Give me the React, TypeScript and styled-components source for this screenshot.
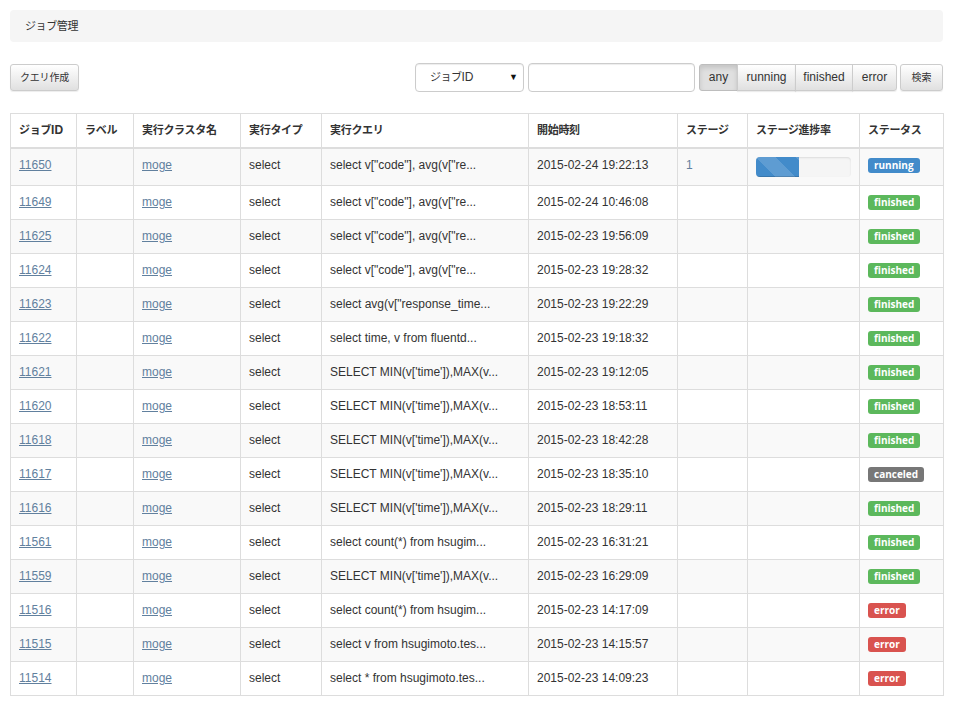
import React from "react";
import styled, { createGlobalStyle } from "styled-components";

const Global = createGlobalStyle`
  * { box-sizing: border-box; }
  html, body { margin: 0; padding: 0; background: #fff; }
  body {
    font-family: "Liberation Sans", Arial, "Noto Sans CJK JP", sans-serif;
    font-size: 12px;
    line-height: 17px;
    color: #333;
  }
`;

const Jp = styled.span<{ $size?: number; $ls?: number }>`
  font-size: ${(p) => p.$size ?? 11}px;
  letter-spacing: ${(p) => p.$ls ?? 0}px;
`;

const Page = styled.div`
  padding: 10px 15px 0 10px;
  width: 958px;
`;

const Breadcrumb = styled.div`
  background: #f5f5f5;
  border-radius: 4px;
  padding: 8px 15px 7px;
  height: 32px;
  line-height: 17px;
  color: #333;
`;

const Toolbar = styled.div`
  display: flex;
  align-items: center;
  margin-top: 21px;
  height: 29px;
`;

const Spacer = styled.div`
  flex: 1;
`;

const Btn = styled.button<{ $active?: boolean }>`
  font-family: "Liberation Sans", Arial, "Noto Sans CJK JP", sans-serif;
  font-size: 12px;
  line-height: 17px;
  height: 27px;
  padding: 0 10px;
  color: #333;
  border: 1px solid #ccc;
  border-radius: 3px;
  cursor: pointer;
  background: ${(p) =>
    p.$active
      ? "#e0e0e0"
      : "linear-gradient(to bottom, #ffffff 0%, #e0e0e0 100%)"};
  box-shadow: ${(p) =>
    p.$active
      ? "inset 0 3px 5px rgba(0,0,0,.125)"
      : "inset 0 1px 0 rgba(255,255,255,.15), 0 1px 1px rgba(0,0,0,.075)"};
  border-color: ${(p) => (p.$active ? "#bdbdbd" : "#ccc")};
`;

const CreateBtn = styled(Btn)`
  width: 69px;
  padding: 0;
`;

const SelectBox = styled.div`
  width: 109px;
  height: 29px;
  border: 1px solid #ccc;
  border-radius: 4px;
  background: #fff;
  display: flex;
  align-items: center;
  justify-content: space-between;
  padding: 0 5px 0 14px;
  box-shadow: inset 0 1px 1px rgba(0,0,0,.075);
`;

const Arrow = styled.span`
  font-size: 9px;
  color: #111;
`;

const TextInput = styled.input`
  width: 167px;
  height: 29px;
  margin-left: 4px;
  border: 1px solid #ccc;
  border-radius: 4px;
  box-shadow: inset 0 1px 1px rgba(0,0,0,.075);
  padding: 0 8px;
  font-size: 12px;
  outline: none;
`;

const Group = styled.div`
  display: flex;
  margin-left: 4px;
  & > button {
    border-radius: 0;
    margin-left: -1px;
  }
  & > button:first-child {
    border-radius: 3px 0 0 3px;
    margin-left: 0;
  }
  & > button:last-child {
    border-radius: 0 3px 3px 0;
  }
`;

const GroupBtn = styled(Btn)<{ $w: number }>`
  width: ${(p) => p.$w}px;
  padding: 0;
`;

const SearchBtn = styled(Btn)`
  width: 43px;
  padding: 0;
  margin-left: 3px;
`;

const Table = styled.table`
  margin-top: 21px;
  width: 933px;
  border-collapse: collapse;
  table-layout: fixed;
  border: 1px solid #ddd;
`;

const Th = styled.th`
  text-align: left;
  font-weight: bold;
  padding: 8px 8px 8px;
  border: 1px solid #ddd;
  border-bottom: 2px solid #ddd;
  white-space: nowrap;
  overflow: hidden;
  color: #333;
`;

const Tr = styled.tr<{ $striped: boolean }>`
  background: ${(p) => (p.$striped ? "#f9f9f9" : "#fff")};
`;

const Td = styled.td`
  padding: 8px;
  border: 1px solid #ddd;
  vertical-align: top;
  white-space: nowrap;
  overflow: hidden;
  height: 34px;
`;

const Link = styled.a`
  color: #61809e;
  text-decoration: underline;
  cursor: pointer;
`;

const StageNum = styled.span`
  color: #61809e;
`;

const Progress = styled.div`
  height: 20px;
  background: #f5f5f5;
  border-radius: 4px;
  overflow: hidden;
  box-shadow: inset 0 1px 2px rgba(0,0,0,.1);
`;

const ProgressBar = styled.div`
  height: 100%;
  background-color: #428bca;
  background-image: linear-gradient(
    45deg,
    rgba(255,255,255,.15) 25%,
    transparent 25%,
    transparent 50%,
    rgba(255,255,255,.15) 50%,
    rgba(255,255,255,.15) 75%,
    transparent 75%,
    transparent
  );
  background-size: 40px 40px;
  box-shadow: inset 0 -1px 0 rgba(0,0,0,.15);
`;

const statusColor: Record<string, string> = {
  running: "#428bca",
  finished: "#5cb85c",
  canceled: "#777777",
  error: "#d9534f",
};

const Label = styled.span<{ $status: string }>`
  display: inline-block;
  margin-top: 1px;
  padding: 1px 6px 2px;
  font-family: "Open Sans", "DejaVu Sans", sans-serif;
  font-size: 10px;
  font-weight: bold;
  line-height: 12px;
  color: #fff;
  border-radius: 3px;
  background: ${(p) => statusColor[p.$status]};
`;

type Row = {
  id: string;
  query: string;
  start: string;
  status: string;
  stage?: string;
  progress?: number;
};

const rows: Row[] = [
  { id: "11650", query: 'select v["code"], avg(v["re...', start: "2015-02-24 19:22:13", status: "running", stage: "1", progress: 45 },
  { id: "11649", query: 'select v["code"], avg(v["re...', start: "2015-02-24 10:46:08", status: "finished" },
  { id: "11625", query: 'select v["code"], avg(v["re...', start: "2015-02-23 19:56:09", status: "finished" },
  { id: "11624", query: 'select v["code"], avg(v["re...', start: "2015-02-23 19:28:32", status: "finished" },
  { id: "11623", query: 'select avg(v["response_time...', start: "2015-02-23 19:22:29", status: "finished" },
  { id: "11622", query: "select time, v from fluentd...", start: "2015-02-23 19:18:32", status: "finished" },
  { id: "11621", query: "SELECT MIN(v['time']),MAX(v...", start: "2015-02-23 19:12:05", status: "finished" },
  { id: "11620", query: "SELECT MIN(v['time']),MAX(v...", start: "2015-02-23 18:53:11", status: "finished" },
  { id: "11618", query: "SELECT MIN(v['time']),MAX(v...", start: "2015-02-23 18:42:28", status: "finished" },
  { id: "11617", query: "SELECT MIN(v['time']),MAX(v...", start: "2015-02-23 18:35:10", status: "canceled" },
  { id: "11616", query: "SELECT MIN(v['time']),MAX(v...", start: "2015-02-23 18:29:11", status: "finished" },
  { id: "11561", query: "select count(*) from hsugim...", start: "2015-02-23 16:31:21", status: "finished" },
  { id: "11559", query: "SELECT MIN(v['time']),MAX(v...", start: "2015-02-23 16:29:09", status: "finished" },
  { id: "11516", query: "select count(*) from hsugim...", start: "2015-02-23 14:17:09", status: "error" },
  { id: "11515", query: "select v from hsugimoto.tes...", start: "2015-02-23 14:15:57", status: "error" },
  { id: "11514", query: "select * from hsugimoto.tes...", start: "2015-02-23 14:09:23", status: "error" },
];

const cols = [66, 57, 107, 81, 207, 149, 70, 112, 84];
const headers: [string, string][] = [
  ["ジョブ", "ID"],
  ["ラベル", ""],
  ["実行クラスタ名", ""],
  ["実行タイプ", ""],
  ["実行クエリ", ""],
  ["開始時刻", ""],
  ["ステージ", ""],
  ["ステージ進捗率", ""],
  ["ステータス", ""],
];

export default function App() {
  return (
    <Page>
      <Global />
      <Breadcrumb>
        <Jp $size={11} $ls={-0.4}>ジョブ管理</Jp>
      </Breadcrumb>
      <Toolbar>
        <CreateBtn>
          <Jp $size={10} $ls={-0.2}>クエリ作成</Jp>
        </CreateBtn>
        <Spacer />
        <SelectBox>
          <span>
            <Jp $size={11} $ls={-0.5}>ジョブ</Jp>ID
          </span>
          <Arrow>▼</Arrow>
        </SelectBox>
        <TextInput />
        <Group>
          <GroupBtn $w={39} $active>any</GroupBtn>
          <GroupBtn $w={59}>running</GroupBtn>
          <GroupBtn $w={58}>finished</GroupBtn>
          <GroupBtn $w={45}>error</GroupBtn>
        </Group>
        <SearchBtn>
          <Jp $size={10}>検索</Jp>
        </SearchBtn>
      </Toolbar>
      <Table>
        <colgroup>
          {cols.map((w, i) => (
            <col key={i} style={{ width: w }} />
          ))}
        </colgroup>
        <thead>
          <tr>
            {headers.map(([jp, en]) => (
              <Th key={jp}>
                <Jp $size={11} $ls={-0.3}>{jp}</Jp>
                {en}
              </Th>
            ))}
          </tr>
        </thead>
        <tbody>
          {rows.map((r, i) => (
            <Tr key={r.id} $striped={i % 2 === 0}>
              <Td><Link>{r.id}</Link></Td>
              <Td></Td>
              <Td><Link>moge</Link></Td>
              <Td>select</Td>
              <Td>{r.query}</Td>
              <Td>{r.start}</Td>
              <Td>{r.stage ? <StageNum>{r.stage}</StageNum> : null}</Td>
              <Td>
                {r.progress !== undefined ? (
                  <Progress>
                    <ProgressBar style={{ width: `${r.progress}%` }} />
                  </Progress>
                ) : null}
              </Td>
              <Td><Label $status={r.status}>{r.status}</Label></Td>
            </Tr>
          ))}
        </tbody>
      </Table>
    </Page>
  );
}
